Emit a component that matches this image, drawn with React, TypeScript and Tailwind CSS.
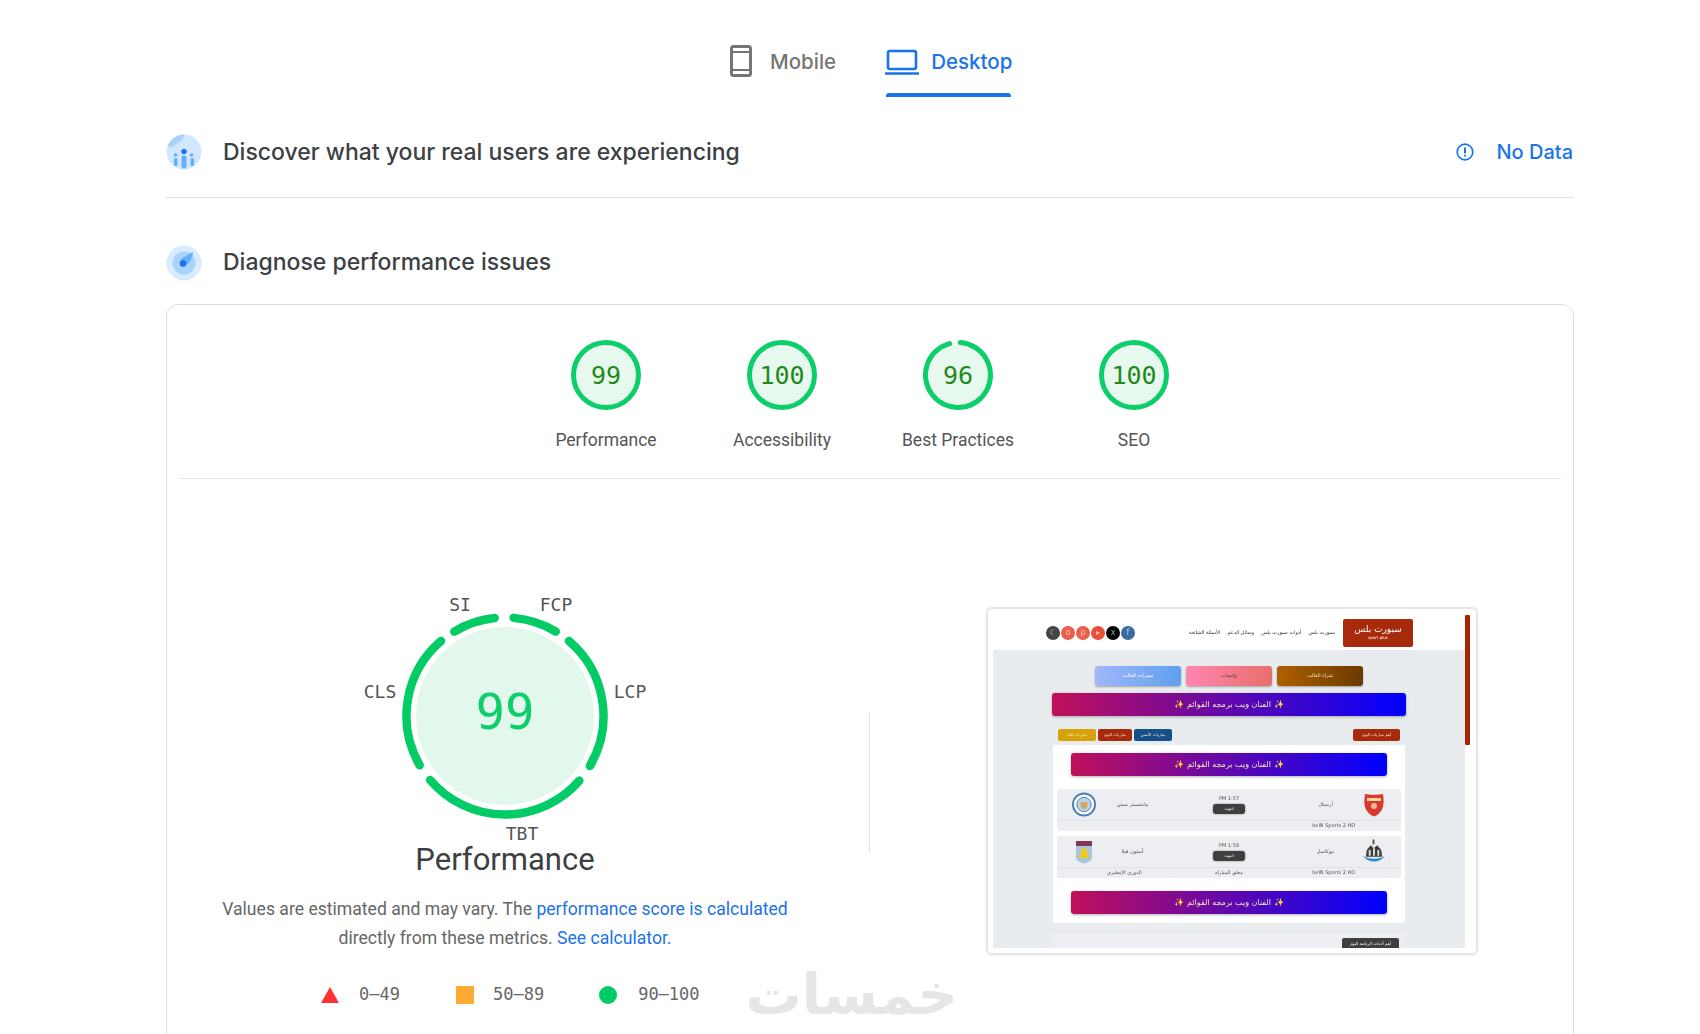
const polar = (r: number, deg: number) => {
  const a = ((deg - 90) * Math.PI) / 180;
  return [Math.cos(a) * r, Math.sin(a) * r];
};

// arc between two angles, clockwise from 12 o'clock
const arc = (r: number, from: number, to: number) => {
  const [x1, y1] = polar(r, from);
  const [x2, y2] = polar(r, to);
  return `M ${x1} ${y1} A ${r} ${r} 0 ${to - from > 180 ? 1 : 0} 1 ${x2} ${y2}`;
};

const SEGMENTS = [
  [5, 31],
  [40.5, 120.5],
  [131, 229.5],
  [240, 319.5],
  [329, 354],
];

function ScoreGauge({ score, label }: { score: number; label: string }) {
  return (
    <div className="w-[176px] flex flex-col items-center">
      <div className="relative w-[70px] h-[70px]">
        <svg width="70" height="70" viewBox="-35 -35 70 70">
          <circle r="32.5" fill="#e7f9ef" />
          {score >= 99 ? (
            <circle r="32.5" fill="none" stroke="#0cce6b" strokeWidth="5" />
          ) : (
            <path d={arc(32.5, 4, 345)} fill="none" stroke="#0cce6b" strokeWidth="5" strokeLinecap="round" />
          )}
        </svg>
        <div className="absolute inset-0 pt-[1px] flex items-center justify-center font-['DejaVu_Sans_Mono',monospace] text-[25px] text-[#1f8a18]">
          {score}
        </div>
      </div>
      <div className="mt-[17px] font-['Roboto',sans-serif] text-[17.5px] leading-[26px] text-[#555]">{label}</div>
    </div>
  );
}

function BigGauge() {
  return (
    <svg width="340" height="256" viewBox="-170 -125 340 256" className="block">
      <circle r="89" fill="#e2f8ec" />
      {SEGMENTS.map(([a, b]) => (
        <path key={a} d={arc(98.5, a, b)} fill="none" stroke="#03cc66" strokeWidth="8.5" strokeLinecap="round" />
      ))}
      <text x="0" y="13" textAnchor="middle" fontSize="49" fill="#0cce6b" fontFamily="DejaVu Sans Mono, monospace">99</text>
      <g fontSize="18" fill="#555" fontFamily="DejaVu Sans Mono, monospace">
        <text x="-45" y="-105" textAnchor="middle">SI</text>
        <text x="51" y="-105" textAnchor="middle">FCP</text>
        <text x="-125" y="-18" textAnchor="middle">CLS</text>
        <text x="125" y="-18" textAnchor="middle">LCP</text>
        <text x="17" y="124" textAnchor="middle">TBT</text>
      </g>
    </svg>
  );
}

function Banner({ className }: { className: string }) {
  return (
    <div className={`h-[23px] shrink-0 rounded-[3px] bg-linear-to-r/srgb from-[#c0105a] to-[#0000ff] shadow-[0_1px_3px_rgba(0,0,0,0.3)] flex items-center justify-center text-[8px] text-[#f5e6c8] ${className}`} dir="rtl">
      ✨ الفنان ويب برمجه القوائم ✨
    </div>
  );
}

function MatchRow({ home, away, homeIcon, awayIcon, time, foot }: { home: string; away: string; homeIcon: any; awayIcon: any; time: string; foot: string[] }) {
  return (
    <div className="h-[42px] shrink-0 rounded-[2px] bg-[#eceef1] flex flex-col text-[5px] text-[#555]" dir="rtl">
      <div className="h-[32px] flex items-center border-b border-[#dfe1e4] px-[15px]">
        <div className="w-[24px] flex justify-center">{homeIcon}</div>
        <div className="flex-1 text-center pl-[30px]">{home}</div>
        <div className="w-[60px] flex flex-col items-center">
          <span>{time}</span>
          <span className="mt-[2px] w-[32px] h-[10px] rounded-[3px] bg-[#3f3f3f] text-white text-[4px] flex items-center justify-center shadow-[0_0_2px_rgba(0,0,0,0.5)]">انتهت</span>
        </div>
        <div className="flex-1 text-center pr-[30px]">{away}</div>
        <div className="w-[24px] flex justify-center">{awayIcon}</div>
      </div>
      <div className="flex-1 flex items-center text-[5px] px-[15px]">
        {foot.map((f, i) => (
          <span key={i} className="flex-1 text-center">{f}</span>
        ))}
      </div>
    </div>
  );
}

const Arsenal = (
  <svg width="20" height="24" viewBox="0 0 20 24">
    <path d="M1 1 C6 2 14 2 19 1 C20 8 20 14 17 18 C15 21 12 23 10 23.5 C8 23 5 21 3 18 C0 14 0 8 1 1 Z" fill="#d93a2b" />
    <rect x="3" y="5" width="14" height="3" fill="#f5d9a0" />
    <circle cx="10" cy="13" r="3" fill="#f3b5a0" />
  </svg>
);
const City = (
  <svg width="25" height="25" viewBox="0 0 25 25">
    <circle cx="12.5" cy="12.5" r="11.5" fill="#fff" stroke="#4a7fb5" strokeWidth="2" />
    <circle cx="12.5" cy="12.5" r="7.5" fill="#b7d4ea" stroke="#4a7fb5" />
    <path d="M9 10 H16 V14 C16 16 14 17 12.5 18 C11 17 9 16 9 14 Z" fill="#d9a662" />
  </svg>
);
const Newcastle = (
  <svg width="25" height="25" viewBox="0 0 25 25">
    <rect x="11" y="0" width="2" height="5" fill="#555" />
    <path d="M5 11 L9 6 L12 9 L16 6 L20 11 L21 18 H4 Z" fill="#3d3d3d" />
    <path d="M7 11 h2 v6 h-2 z M11.5 9 h2 v8 h-2 z M16 11 h2 v6 h-2 z" fill="#ddd" />
    <path d="M1 17 C6 25 19 25 24 17 C19 21 6 21 1 17 Z" fill="#2a8fc8" />
  </svg>
);
const Villa = (
  <svg width="18" height="24" viewBox="0 0 18 24">
    <path d="M1 1 H17 V18 C17 21 12 23 9 23.5 C6 23 1 21 1 18 Z" fill="#a9c6e0" />
    <rect x="1" y="1" width="16" height="5" fill="#7d3a55" />
    <path d="M9 7 C12 9 13 12 14 18 H4 C5 12 6 9 9 7 Z" fill="#f0c92c" />
  </svg>
);

function Social({ className, children }: { className: string; children?: string }) {
  return <span className={`w-[14px] h-[14px] rounded-full flex items-center justify-center text-[8px] leading-none text-white/60 ${className}`}>{children}</span>;
}

function ScreenshotPreview() {
  return (
    <div className="w-[492px] h-[348px] shrink-0 rounded-[6px] border-2 border-[#e6e6e6] bg-white shadow-[0_1px_2px_rgba(0,0,0,0.05)] pl-[5px] pr-[6px] pt-[6px] pb-[5px] overflow-hidden">
      <div className="h-full flex font-['DejaVu_Sans',sans-serif] blur-[0.4px]">
        <div className="flex-1 flex flex-col bg-[#e9ecef] overflow-hidden">
          <div className="h-[35px] shrink-0 bg-white flex items-center pl-[53px]">
            <div className="flex gap-[1px]">
              <Social className="bg-[#444]">☾</Social>
              <Social className="bg-[#e8604c]">o</Social>
              <Social className="bg-[#e8604c]">p</Social>
              <Social className="bg-[#e8503c]">▸</Social>
              <Social className="bg-black">x</Social>
              <Social className="bg-[#3b6ba5]">f</Social>
            </div>
            <div className="ml-[54px] w-[146px] flex justify-between text-[5px] text-[#333]" dir="rtl">
              <span>سبورت بلس</span>
              <span>أدوات سبورت بلس</span>
              <span>وسائل الدعم</span>
              <span>الأسئلة الشائعة</span>
            </div>
            <div className="ml-[8px] w-[70px] h-[28px] rounded-[2px] bg-[#a82a0c] flex flex-col items-center justify-center text-white leading-none">
              <span className="text-[9px]">سبورت بلس</span>
              <span className="text-[4px] mt-[2px]">sport plus</span>
            </div>
          </div>
          <div className="mt-[16px] shrink-0 flex justify-center gap-[5px]" dir="rtl">
            <div className="w-[86px] h-[20px] rounded-[3px] bg-linear-to-r/srgb from-[#b06000] to-[#6a3a00] shadow-[0_1px_2px_rgba(0,0,0,0.3)] flex items-center justify-center text-[5px] text-[#f5e6c8]">شراء القالب</div>
            <div className="w-[86px] h-[20px] rounded-[3px] bg-linear-to-r/srgb from-[#ff85b0] to-[#e8706a] shadow-[0_1px_2px_rgba(0,0,0,0.3)] flex items-center justify-center text-[5px] text-[#444]">واتساب</div>
            <div className="w-[86px] h-[20px] rounded-[3px] bg-linear-to-r/srgb from-[#a0b8f8] to-[#5fa0ee] shadow-[0_1px_2px_rgba(0,0,0,0.3)] flex items-center justify-center text-[5px] text-white">مميزات القالب</div>
          </div>
          <Banner className="mt-[7px] mx-[59px]" />
          <div className="mt-[8px] mx-[60px] shrink-0 flex flex-col">
            <div className="h-[21px] shrink-0 flex items-center justify-between px-[5px] text-[4px] text-[#f0e6c8]">
              <div className="flex gap-[2px]">
                <span className="w-[38px] h-[12px] rounded-[2px] bg-[#d6a208] flex items-center justify-center">مباريات الغد</span>
                <span className="w-[34px] h-[12px] rounded-[2px] bg-[#a82a0c] flex items-center justify-center">مباريات اليوم</span>
                <span className="w-[38px] h-[12px] rounded-[2px] bg-[#14508a] flex items-center justify-center">مباريات الأمس</span>
              </div>
              <span className="w-[47px] h-[12px] rounded-[2px] bg-[#a82a0c] flex items-center justify-center">أهم مباريات اليوم</span>
            </div>
            <div className="h-[178px] shrink-0 rounded-b-[2px] bg-white px-[4px] pt-[8px] flex flex-col">
              <Banner className="mx-[14px]" />
              <div className="mt-[13px] flex flex-col gap-[5px]">
                <MatchRow home="آرسنال" away="مانشستر سيتي" homeIcon={Arsenal} awayIcon={City} time="PM 1:57" foot={["beIN Sports 2 HD", "", ""]} />
                <MatchRow home="نيوكاسل" away="أستون فيلا" homeIcon={Newcastle} awayIcon={Villa} time="PM 1:58" foot={["beIN Sports 2 HD", "معلق المباراة", "الدوري الإنجليزي"]} />
              </div>
              <Banner className="mx-[14px] mt-[13px]" />
            </div>
            <div className="mt-[10px] h-[20px] shrink-0 rounded-t-[2px] bg-[#eceef1] flex justify-end pt-[5px] pr-[6px]">
              <span className="w-[57px] h-[12px] rounded-[2px] bg-[#3f3f3f] text-[4px] text-white flex items-center justify-center">أهم أحداث الرياضة اليوم</span>
            </div>
          </div>
        </div>
        <div className="w-[5px] h-[130px] shrink-0 rounded-[1px] bg-[#a82400]" />
      </div>
    </div>
  );
}

export default function App() {
  return (
    <div className="h-[1034px] overflow-hidden bg-white font-['Roboto',sans-serif]">
      <div className="ml-[166px] w-[1408px]">
        {/* device tabs */}
        <div className="h-[97px] flex pl-[564px]">
          <div className="flex items-start pt-[45px] gap-[18px] text-[#757575]">
            <svg width="22" height="32" viewBox="0 0 22 32" fill="none" stroke="currentColor">
              <rect x="1.5" y="1.5" width="19" height="29" rx="2" strokeWidth="3" />
              <path d="M2 7 H20 M2 25 H20" strokeWidth="2" />
            </svg>
            <span className="mt-[1px] font-['Inter',sans-serif] text-[20.5px] leading-[32px] font-medium">Mobile</span>
          </div>
          <div className="ml-[50px] w-[127px] flex flex-col text-[#1a73e8]">
            <div className="flex items-start pt-[45px] gap-[12px]">
              <svg width="34" height="30" viewBox="0 0 34 30" fill="none" stroke="currentColor" className="mt-[4px] -ml-[1px]">
                <rect x="3" y="2" width="28" height="18" rx="2" strokeWidth="2.6" />
                <path d="M0 24.5 H34" strokeWidth="2.4" />
              </svg>
              <span className="mt-[1px] font-['Inter',sans-serif] text-[20.5px] leading-[32px] font-medium">Desktop</span>
            </div>
            <div className="mt-auto w-[125px] h-[4px] rounded-t-[3px] bg-[#1a73e8]" />
          </div>
        </div>

        {/* field data row */}
        <div className="h-[101px] border-b border-[#dedede] flex items-center pt-[10px]">
          <svg width="36" height="36" viewBox="0 0 36 36">
            <circle cx="18" cy="18" r="17.5" fill="#d2e7ff" />
            <path d="M18 .5 A17.5 17.5 0 0 0 1.5 12 C6 14 9 12 11 9 C14 9 18 6 18 .5 Z" fill="#a8d0fb" />
            <circle cx="18" cy="17.5" r="2.7" fill="#1a73e8" />
            <circle cx="9.5" cy="21" r="1.8" fill="#62b1f7" />
            <circle cx="25.5" cy="21" r="1.8" fill="#62b1f7" />
            <rect x="15.5" y="21.5" width="5" height="13" rx="2" fill="#62b1f7" />
            <rect x="8" y="24" width="3.5" height="8" rx="1.5" fill="#62b1f7" />
            <rect x="24.5" y="24" width="3.5" height="8" rx="1.5" fill="#62b1f7" />
          </svg>
          <h2 className="ml-[21px] font-['Inter',sans-serif] text-[23px] font-medium text-[#3c4043]">Discover what your real users are experiencing</h2>
          <div className="ml-auto flex items-center text-[#1a73e8]">
            <svg width="18" height="18" viewBox="0 0 18 18" fill="none" stroke="currentColor">
              <circle cx="9" cy="9" r="7.8" strokeWidth="1.7" />
              <path d="M9 4.5 V10.5 M9 12 V13.6" strokeWidth="2" />
            </svg>
            <span className="ml-[22px] mr-[1px] font-['Inter',sans-serif] text-[20px] font-medium">No Data</span>
          </div>
        </div>

        {/* lab data header */}
        <div className="h-[106px] flex items-center pt-[23px]">
          <svg width="36" height="36" viewBox="0 0 36 36">
            <circle cx="18" cy="18" r="17.5" fill="#d9ebff" />
            <circle cx="18" cy="18" r="11.5" fill="#a9d3fb" />
            <path d="M27 7 C26 15 22 21 16 21.5 C13 19 14 14 18 12 C21 10 24 9 27 7 Z" fill="#62b1f7" />
            <circle cx="17" cy="18.5" r="3.2" fill="#1a73e8" />
          </svg>
          <h2 className="ml-[21px] font-['Inter',sans-serif] text-[23px] font-medium text-[#3c4043]">Diagnose performance issues</h2>
        </div>

        {/* report card */}
        <div className="h-[760px] rounded-[12px] border border-[#dedede] px-[12px]">
          <div className="h-[174px] border-b border-[#e4e4e4] flex justify-center pt-[35px]">
            <ScoreGauge score={99} label="Performance" />
            <ScoreGauge score={100} label="Accessibility" />
            <ScoreGauge score={96} label="Best Practices" />
            <ScoreGauge score={100} label="SEO" />
          </div>
          <div className="flex">
            <div className="w-[652px] shrink-0 flex flex-col items-center pt-[112px]">
              <BigGauge />
              <div className="-mt-[3px] font-['Roboto',sans-serif] text-[31px] leading-[32px] text-[#3c4043]">Performance</div>
              <p className="mt-[19px] w-[640px] text-center text-[17.6px] leading-[29px] text-[#666]">
                Values are estimated and may vary. The <a className="text-[#1a73e8]">performance score is calculated</a>
                <br />
                directly from these metrics. <a className="text-[#1a73e8]">See calculator.</a>
              </p>
              <div className="mt-[19px] self-start flex items-center pl-[142px] text-[#666] font-['DejaVu_Sans_Mono',monospace] whitespace-nowrap">
                <svg width="18" height="18" viewBox="0 0 18 18"><path d="M9 1 L18 17 H0 Z" fill="#ff3333" /></svg>
                <span className="ml-[20px] text-[17px]">0–49</span>
                <span className="ml-[56px] w-[18px] h-[18px] bg-[#ffaa33]" />
                <span className="ml-[19px] text-[17px]">50–89</span>
                <span className="ml-[55px] w-[18px] h-[18px] rounded-full bg-[#00cc66]" />
                <span className="ml-[21px] text-[17px]">90–100</span>
                <span className="ml-[46px] font-['DejaVu_Sans',sans-serif] text-[56px] leading-[46px] font-bold text-[#e6e6e6]" dir="rtl">خمسات</span>
              </div>
            </div>
            <div className="ml-[38px] mt-[233px] h-[140px] w-[1px] shrink-0 bg-[#e0e0e0]" />
            <div className="ml-[116px] mt-[128px]">
              <ScreenshotPreview />
            </div>
          </div>
        </div>
      </div>
    </div>
  );
}
